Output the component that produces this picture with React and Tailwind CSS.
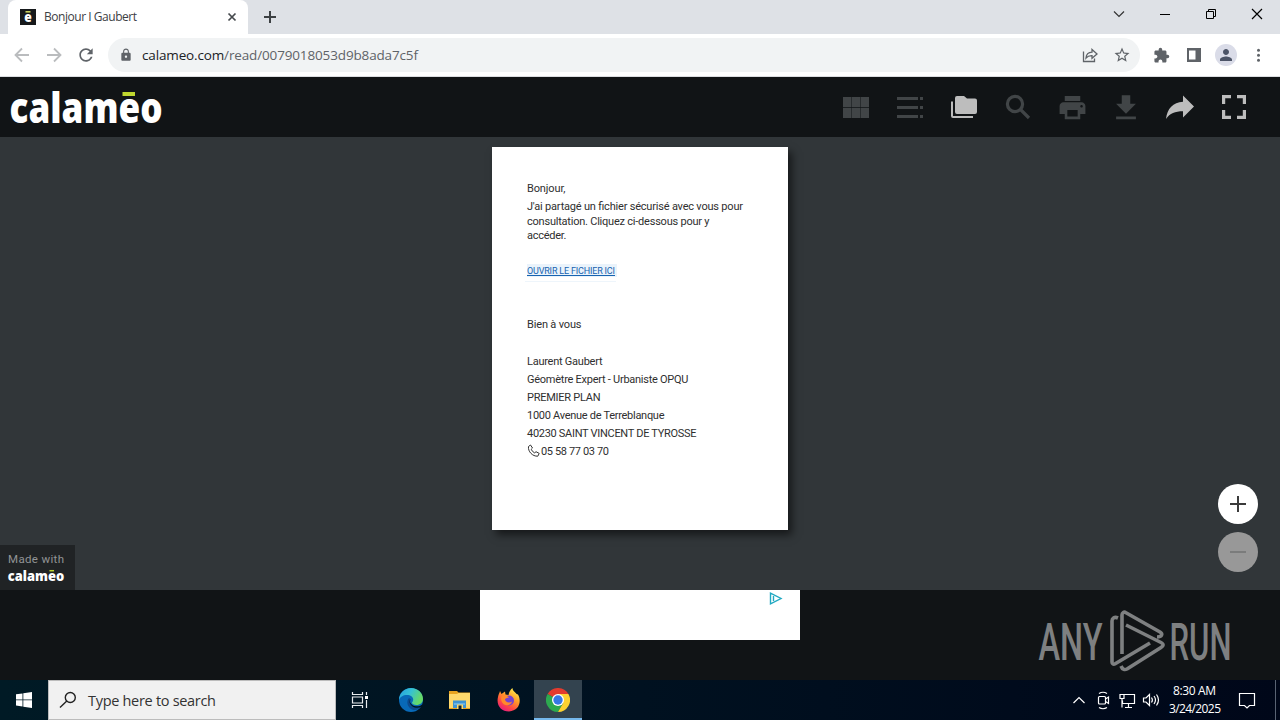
import React from 'react';
import { MdPrint, MdFileDownload, MdExtension, MdPerson, MdLock, MdStarBorder } from 'react-icons/md';

const signature = [
  { text: 'Laurent Gaubert', width: 75 },
  { text: 'Géomètre Expert - Urbaniste OPQU', width: 161 },
  { text: 'PREMIER PLAN', width: 73 },
  { text: '1000 Avenue de Terreblanque', width: 137 },
  { text: '40230 SAINT VINCENT DE TYROSSE', width: 169 },
];

// One line of text fitted to a fixed width
function Line({ text, width, size = 11, height = 14, base = 11, font = 'Roboto', fill = '#2f2f2f', className = '', children }) {
  return (
    <svg width={width + 2} height={height} className={`block shrink-0 overflow-visible ${className}`}>
      <text x="0" y={base} fontSize={size} fontFamily={`${font}, sans-serif`} fill={fill} textLength={width} lengthAdjust="spacing">
        {children || text}
      </text>
    </svg>
  );
}

function TabStrip() {
  return (
    <div className="flex h-[34px] bg-[#dee1e6]">
      <div className="ml-2 flex h-[34px] w-[240px] items-center rounded-t-lg bg-white pl-3 pr-2">
        <svg width="16" height="16" viewBox="0 0 16 16" className="overflow-visible">
          <rect width="16" height="16" fill="#16191b" />
          <rect x="5.5" y="2" width="5" height="1.6" fill="#c5cf5c" />
          <text x="8" y="13.2" fontSize="14" fontWeight="800" textAnchor="middle" fontFamily="Open Sans, sans-serif" fill="#fff" textLength="7.5" lengthAdjust="spacingAndGlyphs">e</text>
        </svg>
        <Line text="Bonjour I Gaubert" width={93} size={12} height={16} base={12} font="Open Sans" fill="#3c4043" className="ml-2" />
        <svg width="16" height="16" viewBox="0 0 16 16" className="ml-auto" stroke="#45494d" strokeWidth="1.7">
          <path d="M4.500 4.500l7 7M11.500 4.500l-7 7" />
        </svg>
      </div>
      <svg width="16" height="16" viewBox="0 0 16 16" className="ml-3.5 mt-[9px]" stroke="#3c4043" strokeWidth="2">
        <path d="M8 2v12M2 8h12" />
      </svg>
      <div className="ml-auto flex h-7 items-center text-black">
        <svg width="46" height="28" viewBox="0 0 46 28" fill="none" stroke="#333" strokeWidth="1.2">
          <path d="M18 11.500l5 5 5-5" />
        </svg>
        <svg width="46" height="28" viewBox="0 0 46 28" stroke="currentColor">
          <path d="M18 14.500h10" />
        </svg>
        <svg width="46" height="28" viewBox="0 0 46 28" fill="none" stroke="currentColor">
          <path d="M18.500 11.500h7v7h-7zM20.500 11.500v-2h7v7h-2" />
        </svg>
        <svg width="46" height="28" viewBox="0 0 46 28" stroke="currentColor" strokeWidth="1.2">
          <path d="M18 9l10 10M28 9l-10 10" />
        </svg>
      </div>
    </div>
  );
}

function AddressBar() {
  return (
    <div className="flex h-[43px] items-center border-b border-[#dcdee1] bg-white text-[#5f6368]">
      <svg width="72" height="32" viewBox="0 0 72 32" fill="none" stroke="#babcbe" strokeWidth="1.8">
        <path d="M29 16H16M22 9.500L15.500 16l6.500 6.500M47 16h13M54 9.500l6.500 6.500-6.500 6.500" />
      </svg>
      <svg width="20" height="20" viewBox="0 0 24 24" fill="currentColor" className="ml-1">
        <path d="M17.650 6.350C16.200 4.900 14.210 4 12 4c-4.420 0-7.990 3.580-7.990 8s3.570 8 7.990 8c3.730 0 6.840-2.550 7.730-6h-2.080c-.820 2.330-3.040 4-5.650 4-3.310 0-6-2.690-6-6s2.690-6 6-6c1.660 0 3.140.690 4.220 1.780L13 11h7V4l-2.350 2.350z" />
      </svg>
      <div className="ml-3 flex h-[34px] w-[1032px] items-center rounded-full bg-[#f1f3f4] pl-[11px] pr-[9px]">
        <MdLock className="h-3.5 w-3.5" />
        <Line width={276} size={13.5} height={18} base={14} font="Open Sans" fill="#5f6368" className="ml-[9px]">
          <tspan fill="#202124">calameo.com</tspan>/read/0079018053d9b8ada7c5f
        </Line>
        <svg width="18" height="18" viewBox="0 0 18 18" fill="none" stroke="currentColor" strokeWidth="1.3" className="ml-auto">
          <path d="M2.500 5.500v10h11v-3" />
          <path d="M5 12c.3-4 2.500-5.700 6-5.800V3.500L16 8l-5 4.300V9.700C8.500 9.600 6.500 10.300 5 12z" />
        </svg>
        <MdStarBorder className="ml-3.5 h-[18px] w-[18px]" />
      </div>
      <MdExtension className="ml-[13px] h-[17px] w-[17px]" />
      <svg width="16" height="16" viewBox="0 0 16 16" className="ml-4">
        <path fill="currentColor" fillRule="evenodd" d="M1 1h14v14H1zM3 3.500v9h6.500v-9z" />
      </svg>
      <div className="ml-[13px] flex h-[22px] w-[22px] items-center justify-center rounded-full bg-[#dadce8] text-[#4c5467]">
        <MdPerson className="h-[18px] w-[18px]" />
      </div>
      <svg width="20" height="20" viewBox="0 0 20 20" fill="currentColor" className="ml-3">
        <circle cx="9.500" cy="5.200" r="1.500" />
        <circle cx="9.500" cy="10.200" r="1.500" />
        <circle cx="9.500" cy="15.200" r="1.500" />
      </svg>
    </div>
  );
}

function Logo({ className, size = 42 }) {
  return (
    <svg viewBox="0 0 152 34" className={`overflow-visible ${className}`}>
      <text x="-0.5" y="32.500" fontSize={size} fontWeight="800" fontFamily="Open Sans, sans-serif" fill="#fff" textLength="153" lengthAdjust="spacingAndGlyphs">
        calameo
      </text>
      <rect x="112.500" y="2" width="12.500" height="4" fill="#c0d72f" />
    </svg>
  );
}

function Tool({ children, active }) {
  return (
    <div className={`flex w-[54px] items-center justify-center ${active ? 'text-[#bdbdbd]' : 'text-[#414547]'}`}>
      {children}
    </div>
  );
}

function ReaderHeader() {
  return (
    <div className="flex h-[60px] items-center justify-between bg-[#111416] pl-2.5 pr-[19px]">
      <Logo className="h-[34px] w-[152px]" />
      <div className="flex">
        <Tool>
          <svg width="28" height="28" viewBox="0 0 28 28" fill="currentColor">
            <path d="M1 4h8.300v10H1zM9.800 4h8.400v10H9.800zM18.700 4H27v10h-8.300zM1 14.700h8.300V25H1zM9.800 14.700h8.400V25H9.800zM18.700 14.700H27V25h-8.300z" />
          </svg>
        </Tool>
        <Tool>
          <svg width="28" height="28" viewBox="0 0 28 28" fill="currentColor">
            <path d="M1 4h21v3H1zM24 4h3v3h-3zM1 13h21v3H1zM24 13h3v3h-3zM1 22h21v3H1zM24 22h3v3h-3z" />
          </svg>
        </Tool>
        <Tool active>
          <svg width="28" height="28" viewBox="0 0 28 28" fill="currentColor">
            <path d="M7 3h7l3 2.500h8a2 2 0 0 1 2 2V19a2 2 0 0 1-2 2H7a2 2 0 0 1-2-2V5a2 2 0 0 1 2-2z" />
            <path d="M1 8.500h2V23h20v2H3a2 2 0 0 1-2-2z" />
          </svg>
        </Tool>
        <Tool>
          <svg width="28" height="28" viewBox="0 0 28 28" fill="none" stroke="currentColor" strokeWidth="3.200">
            <circle cx="11" cy="11" r="7.600" />
            <path d="M16.500 16.500l8.500 8.500" />
          </svg>
        </Tool>
        <Tool>
          <MdPrint className="h-[31px] w-[31px]" />
        </Tool>
        <Tool>
          <MdFileDownload className="mt-0.5 h-[34px] w-[34px]" />
        </Tool>
        <Tool active>
          <svg width="28" height="28" viewBox="0 0 28 28" fill="currentColor">
            <path d="M0 26C1.200 15.500 7 9.300 17 8.700V2.500L28 13.500 17 24.500v-6.200C9 18.300 4 20.200 0 26z" />
          </svg>
        </Tool>
        <Tool active>
          <svg width="28" height="28" viewBox="0 0 28 28" fill="none" stroke="currentColor" strokeWidth="3.200">
            <path d="M3.600 11V3.600H11M17 3.600h7.400V11M24.400 17v7.400H17M11 24.400H3.600V17" />
          </svg>
        </Tool>
      </div>
    </div>
  );
}

function Letter() {
  return (
    <div className="h-[383px] w-[296px] bg-white pl-[35px] pt-[34px] shadow-[4px_5px_8px_rgba(0,0,0,0.55)]">
      <Line text="Bonjour," width={38.5} />
      <Line text="J'ai partagé un fichier sécurisé avec vous pour" width={216} className="mt-1" />
      <Line text="consultation. Cliquez ci-dessous pour y" width={182.5} className="mt-px" />
      <Line text="accéder." width={39.5} />
      <div className="-ml-0.5 mt-[22px] flex h-[18px] w-[91px] items-start border-b border-[#eef5fb] pl-0.5">
        <a href="#" className="block h-[13px] w-[90px] bg-[#eaf3fb]">
          <svg width="90" height="13" className="block">
            <text x="0" y="10" fontSize="9" fontFamily="Roboto, sans-serif" fill="#1763b0" textLength="88" lengthAdjust="spacing">OUVRIR LE FICHIER ICI</text>
            <path d="M0 11.500h88" stroke="#1763b0" />
          </svg>
        </a>
      </div>
      <Line text="Bien à vous" width={54.5} className="mt-[35px]" />
      <div className="mt-[23px] flex flex-col gap-[4.1px]">
        {signature.map((line) => (
          <Line key={line.text} text={line.text} width={line.width + 0.5} />
        ))}
        <div className="flex">
          <svg width="13" height="14" viewBox="0 0 13 14" fill="none" stroke="#333" strokeWidth="1">
            <path d="M1.500 2.500L3.500 1l2 3-1.300 1.300c.7 1.700 1.900 2.900 3.500 3.600L9 7.700l3.200 1.700-1.400 2.800C5.500 12.500.8 7.500 1.500 2.500z" />
          </svg>
          <Line text="05 58 77 03 70" width={68} className="ml-px" />
        </div>
      </div>
    </div>
  );
}

function Viewer() {
  return (
    <div className="grid h-[453px] grid-cols-[1fr_296px_1fr] bg-[#313639]">
      <div className="h-[45px] w-[75px] self-end bg-[#202325] pl-2 pt-[7px]">
        <Line text="Made with" width={56} size={11.5} fill="#929495" />
        <Logo size={37} className="mt-[3px] h-[13px] w-[56px]" />
      </div>
      <div className="pt-2.5">
        <Letter />
      </div>
      <div className="flex flex-col items-end gap-2 self-end pb-[18px] pr-[22px]">
        <button className="h-10 w-10 rounded-full bg-white">
          <svg width="40" height="40" viewBox="0 0 40 40" stroke="#3b3b3b" strokeWidth="2">
            <path d="M20 12v16M12 20h16" />
          </svg>
        </button>
        <button className="h-10 w-10 rounded-full bg-[#989898]">
          <svg width="40" height="40" viewBox="0 0 40 40" stroke="#7b7c7c" strokeWidth="2">
            <path d="M12 20h16" />
          </svg>
        </button>
      </div>
    </div>
  );
}

function Watermark() {
  return (
    <svg width="200" height="66" viewBox="0 0 200 66" className="absolute left-[1038px] top-[608px] overflow-visible" fill="#7e8081">
      <g fontFamily="Roboto, sans-serif" fontSize="51.500" fontWeight="500">
        <text x="0.500" y="51.500" textLength="64" lengthAdjust="spacingAndGlyphs">ANY</text>
        <text x="131.500" y="51.500" textLength="62" lengthAdjust="spacingAndGlyphs">RUN</text>
      </g>
      <g fill="none" stroke="#7e8081" strokeWidth="3.600" strokeLinejoin="round">
        <path d="M80 10c-3.500-1.500-6 0-6 3v41c0 2 1.500 2.800 3.200 1.700L112 35" />
        <path d="M84 46V7c0-2.500 2-3.500 4-2.300L122 24c3 2 2 5-3 5" />
        <path d="M88 17l35 17.500c3 1.600 2.500 3.400 0 5L89 61c-2 1-4.500 1-6-3" />
      </g>
    </svg>
  );
}

function AdStrip() {
  return (
    <div className="flex h-[90px] justify-center bg-[#111416]">
      <div className="flex h-[50px] w-[320px] justify-end bg-white pr-[17px] pt-0.5">
        <svg width="14" height="13" viewBox="0 0 14 13" fill="none" stroke="#22a9c2" strokeWidth="1.400">
          <path d="M1.500 1.200v10.600L12 6.500zM4.500 4v5" />
        </svg>
      </div>
    </div>
  );
}

function Edge() {
  return (
    <svg width="24" height="24" viewBox="0 0 24 24">
      <defs>
        <linearGradient id="edge-top" x1="0" x2="1" y1="0" y2=".4">
          <stop offset="0" stopColor="#249fe0" />
          <stop offset=".5" stopColor="#35c1d5" />
          <stop offset="1" stopColor="#67da65" />
        </linearGradient>
      </defs>
      <circle cx="12" cy="12" r="12" fill="#0869b8" />
      <path d="M0 12C0 5 5.500 0 12 0c7 0 12 5.200 12 11 0 3.700-3 6-6.500 6-3 0-4.500-1.200-4.500-2.200 0-.8 1.200-1.200 1.200-3.300C14.200 9 11.500 7 8 7c-4 0-7 2-8 5z" fill="url(#edge-top)" />
      <path d="M10 10c-3 3-2 9 3 11.500 3.500 1.500 7 0 9-3-3 1.500-7 1-8.500-.5-2.300-1.500-3-4-1.500-6.500z" fill="#0c4a8e" />
      <path d="M11 10.500c-1.200 3.500 1.500 7.500 6 7.800 2.500.2 4.500-.6 5.700-1.600L24 17l-1.500 2c-3 1.200-7 1-9-.5-2.800-2-3.700-5-2.500-8z" fill="#001420" />
    </svg>
  );
}

function Explorer() {
  return (
    <svg width="22" height="20" viewBox="0 0 22 20">
      <path d="M0 1h8l1.500 1.500H21V19H0z" fill="#e8a420" />
      <path d="M0 4h8l1.500-1H21v15H0z" fill="#ffd96b" />
      <path d="M4 10.500h13V18h-3v-4H8v4H4z" fill="#3f94d2" />
      <path d="M5 13h11v2H5z" fill="#69b2e2" />
      <path d="M8 14.500h6V19H8z" fill="#ffd96b" />
      <path d="M9.500 15.500h3V19h-3z" fill="#14222b" />
    </svg>
  );
}

function Firefox() {
  return (
    <svg width="24" height="24" viewBox="0 0 24 24">
      <defs>
        <linearGradient id="fox" x1=".8" x2=".2" y1="0" y2="1">
          <stop offset="0" stopColor="#fff44f" />
          <stop offset=".4" stopColor="#ff9a28" />
          <stop offset=".7" stopColor="#ff4a43" />
          <stop offset="1" stopColor="#e31587" />
        </linearGradient>
      </defs>
      <path d="M3 3l1.500 3L8 3.500l.5 3 3 .5C12 4 13.500 1.500 15.500 0c0 3 3 4 4 6l1.500.5c4 7 1 16.500-9 17C4 23.500-1 17 1 9c.4-2.500 1.500-4 2-6z" fill="url(#fox)" />
      <circle cx="12" cy="12.500" r="5" fill="#7542cf" />
      <path d="M5 8c3-1 5-.5 7 1.500-2 0-2.500 1-4 1.500 0 3 4 4.500 7 2.500-1 5-9 5-10.500-.5C4 11 4 9.500 5 8z" fill="#ff8a2b" />
    </svg>
  );
}

function Chrome() {
  return (
    <svg width="24" height="24" viewBox="0 0 24 24">
      <path d="M12 12L1.600 6A12 12 0 0 1 22.400 6z" fill="#e33b2e" />
      <path d="M12 12L1.600 6A12 12 0 0 0 12 24l5.200-9z" fill="#2da94f" />
      <path d="M12 6h10.400A12 12 0 0 1 12 24l5.200-9z" fill="#fdd130" />
      <circle cx="12" cy="12" r="6" fill="#fff" />
      <circle cx="12" cy="12" r="4.700" fill="#3578e5" />
    </svg>
  );
}

function Taskbar() {
  return (
    <div className="flex h-10 items-stretch bg-linear-to-r from-[#001a25] via-[#001120] to-[#000719]">
      <div className="flex w-12 items-center justify-center">
        <svg width="16" height="16" viewBox="0 0 16 16" fill="#fff">
          <path d="M0 2.300l6.500-.9v6.100H0zM7.300 1.300L16 0v7.500H7.300zM0 8.300h6.500v6.100L0 13.500zM7.300 8.300H16V16l-8.700-1.300z" />
        </svg>
      </div>
      <div className="flex w-[288px] items-center border border-[#bcbcbc] bg-[#f1f1f1] pl-2.5">
        <svg width="18" height="18" viewBox="0 0 18 18" fill="none" stroke="#222" strokeWidth="1.400">
          <circle cx="11.300" cy="6.500" r="5" />
          <path d="M7.800 10L1 16.500" />
        </svg>
        <Line text="Type here to search" width={128} size={14.5} height={20} base={15.5} font="Open Sans" fill="#333" className="ml-[11px]" />
      </div>
      <div className="flex w-12 items-center justify-center">
        <svg width="18" height="18" viewBox="0 0 18 18" fill="none" stroke="#e8ecee" strokeWidth="1.200">
          <path d="M1.500 1v2.500h10V1M1.500 6h10v6h-10zM1.500 17v-2.500h10V17M15.500 1v3M15.500 9v8" />
          <path d="M14 5h3v3h-3z" fill="#fff" stroke="none" />
        </svg>
      </div>
      <div className="ml-[3px] flex w-12 items-center justify-center"><Edge /></div>
      <div className="flex w-[50px] items-center justify-center"><Explorer /></div>
      <div className="flex w-12 items-center justify-center"><Firefox /></div>
      <div className="ml-px flex w-12 items-center justify-center border-b-2 border-[#76b9ed] bg-[#33434f] pt-0.5"><Chrome /></div>
      <div className="ml-auto flex items-center text-white">
        <svg width="96" height="24" viewBox="0 0 96 24" fill="none" stroke="currentColor" strokeWidth="1.200">
          <path d="M6.500 15l5.500-5.500 5.500 5.500" />
          <rect x="31.500" y="8.500" width="7" height="7.500" rx="1" />
          <path d="M38.500 11l3-2v6.500l-3-2M32 5.500q4-2.500 8 0M32 19.500q4 2.500 8 0" />
          <path d="M57 6.500h10.500v9H55.500v-3M61.500 15.500v4M58 19.500h7M53 6.500h4v4h-4zM55 10.500v9" />
          <path d="M76.500 10h2.500l3.500-3.500v11L79 14h-2.500zM84.500 9.500q1.800 2.500 0 5M87 8q3 4 0 8M89.500 6.500q4 5.500 0 11" />
        </svg>
        <div className="ml-1.5 flex w-[53px] flex-col items-center gap-0.5">
          <Line text="8:30 AM" width={43} size={12} height={16} base={12} font="Open Sans" fill="#fff" />
          <Line text="3/24/2025" width={52} size={12} height={16} base={12} font="Open Sans" fill="#fff" />
        </div>
        <svg width="18" height="18" viewBox="0 0 18 18" fill="none" stroke="currentColor" strokeWidth="1.200" className="ml-4">
          <path d="M1.500 2.500h15v12h-5L9 17l-2.500-2.500h-5z" />
        </svg>
        <div className="ml-[19px] h-10 w-[5px] border-l border-[#596373]" />
      </div>
    </div>
  );
}

export default function App() {
  return (
    <div className="relative h-[720px] w-[1280px] overflow-hidden">
      <TabStrip />
      <AddressBar />
      <ReaderHeader />
      <Viewer />
      <AdStrip />
      <Taskbar />
      <Watermark />
    </div>
  );
}
